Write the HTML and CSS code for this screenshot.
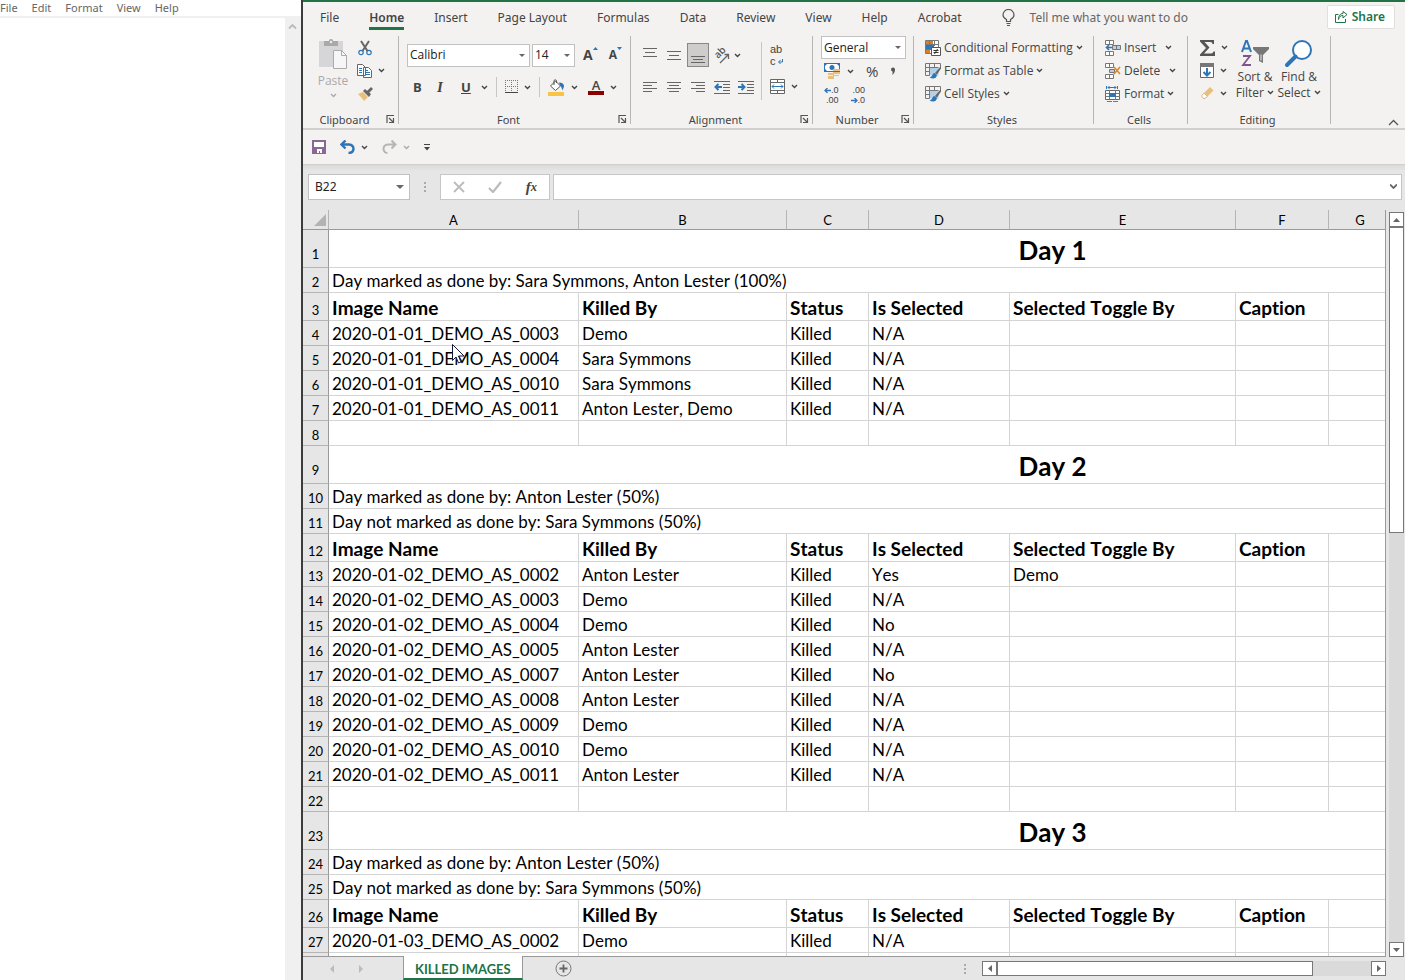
FILE: index.html
```html
<!DOCTYPE html>
<html lang="en">
<head>
    <meta charset="UTF-8">
    <meta name="viewport" content="width=device-width, initial-scale=1.0">
    <title>Killed Images</title>
    <link rel="stylesheet" href="styles.css">
</head>
<body>
    <!-- Shared shapes -->
    <svg class="sprite" width="0" height="0" aria-hidden="true">
        <symbol id="chev" viewBox="0 0 7 5"><path d="M1 1l2.500 2.500L6 1" fill="none" stroke="currentColor" stroke-width="1.400"/></symbol>
        <symbol id="launch" viewBox="0 0 9 9"><path d="M1 8V.500h7M3 3l4 4M7.500 3v4.500H3" fill="none" stroke="#555" stroke-width="1.200"/></symbol>
        <symbol id="table" viewBox="0 0 16 16">
            <path d="M4.500 4.500h9v8h-9z" fill="#b4cfe6"/>
            <path d="M.500 12.500V.500h15V5M.500 4.500h13M4.500.500v12M.500 8.500h4M9.500.500v4M.500 12.500h4" fill="none" stroke="#777"/>
            <path d="M15.500 3.500L10 10l2 1.500 4-6z" fill="#666"/>
            <path d="M9.500 10c-2.500.500-1.500 3.500-5 4.500 3 1.500 7 1.500 7.500-2.500z" fill="#2e75b6"/>
        </symbol>
    </svg>

    <!-- Text editor -->
    <section class="notepad">
        <nav class="notepad-menu">
            <a href="#">File</a>
            <a href="#">Edit</a>
            <a href="#">Format</a>
            <a href="#">View</a>
            <a href="#">Help</a>
        </nav>
        <div class="notepad-body">
            <textarea aria-label="Text editor"></textarea>
            <div class="notepad-scroll">
                <svg width="9" height="7" viewBox="0 0 9 7"><path d="M1 5.500l3.500-3.500L8 5.500" fill="none" stroke="#bbb" stroke-width="1.800"/></svg>
            </div>
        </div>
    </section>

    <!-- Spreadsheet -->
    <main class="excel">
        <nav class="tabs">
            <a href="#">File</a>
            <a href="#" class="active">Home</a>
            <a href="#">Insert</a>
            <a href="#">Page Layout</a>
            <a href="#">Formulas</a>
            <a href="#">Data</a>
            <a href="#">Review</a>
            <a href="#">View</a>
            <a href="#">Help</a>
            <a href="#">Acrobat</a>
            <button class="tell-me">
                <svg width="13" height="18" viewBox="0 0 13 18"><path d="M4.500 12.500v-2C2.500 9.500 1 8 1 6a5.500 5.500 0 0 1 11 0c0 2-1.500 3.500-3.500 4.500v2zM4.500 14.500h4M5 16.500h3" fill="none" stroke="#555" stroke-width="1.200"/></svg>
                Tell me what you want to do
            </button>
            <button class="share">
                <svg width="13" height="12" viewBox="0 0 13 12"><path d="M3.500 3.500h-3v8h10V8M3.500 8.500C4 5.500 5.500 4.500 8 4.500v2.500l4-3.500L8 .500v2C5 2.500 3.500 5 3.500 8.500z" fill="none" stroke="#217346"/></svg>
                Share
            </button>
        </nav>

        <div class="ribbon">
            <section class="group clipboard">
                <div class="group-body">
                    <button class="big paste">
                        <svg width="28" height="30" viewBox="0 0 28 30">
                            <path d="M0 2h24v26H0z" fill="#d6d6d9"/>
                            <path d="M5 2h5V1q2-2 4 0v1h5v5H5z" fill="#a9a9a9"/><circle cx="12" cy="3" r="1.200" fill="#eee"/>
                            <path d="M14.500 11.500h8l5 5v13h-13z" fill="#f6f6f6" stroke="#aaa"/><path d="M22.500 11.500v5h5" fill="none" stroke="#aaa"/>
                        </svg>
                        <span>Paste</span>
                        <svg class="chev"><use href="#chev"/></svg>
                    </button>
                    <div class="stack">
                        <button class="tool" aria-label="Cut"><svg width="16" height="16" viewBox="0 0 16 16"><path d="M4 1l6.500 10M12 1L5.500 11" stroke="#666" stroke-width="2" fill="none"/><circle cx="4" cy="12.500" r="2.200" fill="none" stroke="#2e75b6" stroke-width="1.200"/><circle cx="12" cy="12.500" r="2.200" fill="none" stroke="#2e75b6" stroke-width="1.200"/></svg></button>
                        <button class="tool" aria-label="Copy"><svg width="16" height="16" viewBox="0 0 16 16"><path d="M.500 1.500h5l3 3v8h-8zM6.500 4.500h5l3 3v7h-8z" fill="#fff" stroke="#666"/><path d="M2 5.500h3M2 7.500h3M2 9.500h3M8 9.500h5M8 11.500h5M8 7.500h3" stroke="#2e75b6"/></svg><svg class="chev"><use href="#chev"/></svg></button>
                        <button class="tool" aria-label="Format Painter"><svg width="16" height="16" viewBox="0 0 16 16"><path d="M1 8l5-2 5 5-4 4q-2-3-6-7z" fill="#e8bf7c"/><path d="M6 5l2-2 6 5-2 3zM10 5l4-4 2 2-4 4z" fill="#666"/></svg></button>
                    </div>
                </div>
                <footer><span>Clipboard</span><svg class="launch"><use href="#launch"/></svg></footer>
            </section>

            <section class="group font">
                <div class="group-body rows">
                    <div class="row">
                        <label class="combo combo-font"><select aria-label="Font"><option>Calibri</option></select></label>
                        <label class="combo combo-size"><select aria-label="Font size"><option>14</option></select></label>
                        <button class="grow" aria-label="Increase font size"><b>A</b><svg width="5" height="3" viewBox="0 0 5 3"><path d="M0 3L2.500 0 5 3z" fill="#2e75b6"/></svg></button>
                        <button class="grow shrink" aria-label="Decrease font size"><b>A</b><svg width="5" height="3" viewBox="0 0 5 3"><path d="M0 0h5L2.500 3z" fill="#2e75b6"/></svg></button>
                    </div>
                    <div class="row marks">
                        <button class="letter"><b>B</b></button>
                        <button class="letter italic"><b>I</b></button>
                        <button class="letter underline"><b>U</b><svg class="chev"><use href="#chev"/></svg></button>
                        <i class="bar"></i>
                        <button class="tool" aria-label="Borders"><svg width="13" height="14" viewBox="0 0 13 14"><path d="M.500 0v12M12.500 0v12M6.500 0v12M0 .500h13M0 6.500h13" stroke="#777" stroke-dasharray="1 1"/><path d="M0 12.500h13" stroke="#444"/></svg><svg class="chev"><use href="#chev"/></svg></button>
                        <i class="bar"></i>
                        <button class="tool" aria-label="Fill color"><svg width="17" height="17" viewBox="0 0 17 17"><path d="M2.500 7l5-5 5 5-5 4.500z" fill="#fff" stroke="#555"/><path d="M6 6V1.500q1-1.500 2.500 0V4" fill="none" stroke="#555"/><path d="M11 3.500q5 0 5 4l-1.500 4q-1-4-2.500-5z" fill="#2e75b6"/><path d="M0 13h16v4H0z" fill="#f9c443"/></svg><svg class="chev"><use href="#chev"/></svg></button>
                        <button class="tool" aria-label="Font color"><span class="font-color">A</span><svg class="chev"><use href="#chev"/></svg></button>
                    </div>
                </div>
                <footer><span>Font</span><svg class="launch"><use href="#launch"/></svg></footer>
            </section>

            <section class="group alignment">
                <div class="group-body">
                    <div class="rows">
                        <div class="row">
                            <button class="sq" aria-label="Top align"><svg width="14" height="18" viewBox="0 0 14 18"><path d="M0 2.500h14M2 6.500h10M0 10.500h14" stroke="#666"/></svg></button>
                            <button class="sq" aria-label="Middle align"><svg width="14" height="18" viewBox="0 0 14 18"><path d="M0 5.500h14M2 9.500h10M0 13.500h14" stroke="#666"/></svg></button>
                            <button class="sq pressed" aria-label="Bottom align"><svg width="14" height="18" viewBox="0 0 14 18"><path d="M0 10.500h14M2 13.500h10M0 16.500h14" stroke="#666"/></svg></button>
                            <button class="tool orientation" aria-label="Orientation"><svg width="18" height="18" viewBox="0 0 18 18"><text x="5" y="13" transform="rotate(-45 5 13)">ab</text><path d="M7 17l8-8M11.500 8.500h4V13" fill="none" stroke="#666" stroke-width="1.300"/></svg><svg class="chev"><use href="#chev"/></svg></button>
                        </div>
                        <div class="row">
                            <button class="sq" aria-label="Align left"><svg width="14" height="14" viewBox="0 0 14 14"><path d="M0 2.500h14M0 5.500h9M0 8.500h14M0 11.500h9" stroke="#666"/></svg></button>
                            <button class="sq" aria-label="Center"><svg width="14" height="14" viewBox="0 0 14 14"><path d="M0 2.500h14M2 5.500h10M0 8.500h14M2 11.500h10" stroke="#666"/></svg></button>
                            <button class="sq" aria-label="Align right"><svg width="14" height="14" viewBox="0 0 14 14"><path d="M0 2.500h14M5 5.500h9M0 8.500h14M5 11.500h9" stroke="#666"/></svg></button>
                            <button class="sq" aria-label="Decrease indent"><svg width="16" height="14" viewBox="0 0 16 14"><path d="M0 1.500h16M9 4.500h7M9 7.500h7M9 10.500h7M0 13.500h16" stroke="#666"/><path d="M8 7H2M4.500 4L1.500 7l3 3" fill="none" stroke="#2e75b6" stroke-width="2"/></svg></button>
                            <button class="sq" aria-label="Increase indent"><svg width="16" height="14" viewBox="0 0 16 14"><path d="M0 1.500h16M9 4.500h7M9 7.500h7M9 10.500h7M0 13.500h16" stroke="#666"/><path d="M0 7h6M3.500 4l3 3-3 3" fill="none" stroke="#2e75b6" stroke-width="2"/></svg></button>
                        </div>
                    </div>
                    <i class="bar tall"></i>
                    <div class="rows">
                        <button class="wrap-text" aria-label="Wrap text"><span>ab</span><span>c<svg width="5" height="5" viewBox="0 0 5 5"><path d="M4.500 0v3H1M2.500 1L.500 3l2 2" fill="none" stroke="#2e75b6"/></svg></span></button>
                        <button class="tool merge" aria-label="Merge and center"><svg width="15" height="15" viewBox="0 0 15 15"><path d="M.500.500h14v14H.500zM.500 3.500h14M.500 11.500h14M7.500.500v3M7.500 11.500v3" fill="#fff" stroke="#666"/><path d="M2 7.500h11M4 5.500l-2 2 2 2M11 5.500l2 2-2 2" fill="none" stroke="#2e75b6"/></svg><svg class="chev"><use href="#chev"/></svg></button>
                    </div>
                </div>
                <footer><span>Alignment</span><svg class="launch"><use href="#launch"/></svg></footer>
            </section>

            <section class="group number">
                <div class="group-body rows">
                    <label class="combo"><select aria-label="Number format"><option>General</option></select></label>
                    <div class="row">
                        <button class="tool" aria-label="Accounting format"><svg width="17" height="16" viewBox="0 0 17 16"><path d="M0 0h16v9H0z" fill="#2e75b6"/><path d="M3 1h10l2 2v3l-2 2H3L1 6V3z" fill="#fff"/><circle cx="8" cy="4.500" r="2.500" fill="#2e75b6"/><path d="M9 6h7v2H9zM9 9h7v2H9zM9 12h6v1H9zM4 10h6v2H4zM4 13h6v3H4z" fill="#e8bf7c"/></svg><svg class="chev"><use href="#chev"/></svg></button>
                        <button class="sign">%</button>
                        <button class="sign comma" aria-label="Comma style"><svg width="6" height="8" viewBox="0 0 6 8"><path d="M1 2.500a2 2 0 1 1 4 0Q5 6 2 8 3 6 2.500 4.500 1 4 1 2.500z" fill="#555"/></svg></button>
                    </div>
                    <div class="row decimals">
                        <button class="decimal" aria-label="Increase decimal"><span><svg width="7" height="5" viewBox="0 0 7 5"><path d="M7 2.500H1M3.500 0L1 2.500 3.500 5" fill="none" stroke="#2e75b6" stroke-width="1.300"/></svg>.0</span><span>.00</span></button>
                        <button class="decimal" aria-label="Decrease decimal"><span>.00</span><span><svg width="7" height="5" viewBox="0 0 7 5"><path d="M0 2.500h6M3.500 0L6 2.500 3.500 5" fill="none" stroke="#2e75b6" stroke-width="1.300"/></svg>.0</span></button>
                    </div>
                </div>
                <footer><span>Number</span><svg class="launch"><use href="#launch"/></svg></footer>
            </section>

            <section class="group styles">
                <div class="group-body stack">
                    <button class="tool"><svg width="16" height="16" viewBox="0 0 16 16"><path d="M.500.500h13v13H.500z" fill="#fff" stroke="#777"/><path d="M1 1h7v3H1zM1 9h4v4H1z" fill="#dd7e26"/><path d="M1 5h8v4H1z" fill="#2e75b6"/><path d="M0 4.500h14M0 9.500h6M9.500 0v6M4.500 0v4" stroke="#777"/><path d="M6.500 7.500h9v8h-9z" fill="#fff" stroke="#555"/><path d="M8.500 10.500h5M8.500 12.500h5M12.500 9l-3 5" stroke="#333"/></svg>Conditional Formatting<svg class="chev"><use href="#chev"/></svg></button>
                    <button class="tool"><svg width="16" height="16"><use href="#table"/></svg>Format as Table<svg class="chev"><use href="#chev"/></svg></button>
                    <button class="tool"><svg width="16" height="16"><use href="#table"/></svg>Cell Styles<svg class="chev"><use href="#chev"/></svg></button>
                </div>
                <footer><span>Styles</span></footer>
            </section>

            <section class="group cells">
                <div class="group-body stack">
                    <button class="tool spread"><svg width="16" height="16" viewBox="0 0 16 16"><path d="M.500.500h8v4h-8zM4.500.500v4M.500 11.500h8v4h-8zM4.500 11.500v4" fill="#fff" stroke="#777"/><path d="M7.500 5.500h8v4h-8z" fill="#b4cfe6" stroke="#777"/><path d="M11.500 5.500v4" stroke="#777"/><path d="M7 7.500H2M4 5L1.500 7.500 4 10" fill="none" stroke="#2e75b6" stroke-width="1.600"/></svg>Insert<svg class="chev"><use href="#chev"/></svg></button>
                    <button class="tool spread"><svg width="16" height="16" viewBox="0 0 16 16"><path d="M.500.500h8v4h-8zM4.500.500v4M.500 11.500h8v4h-8zM4.500 11.500v4" fill="#fff" stroke="#777"/><path d="M4.500 6.500h5v3h-5z" fill="#b4cfe6" stroke="#777"/><path d="M9 4l6 7M15 4l-6 7" stroke="#dd8a2e" stroke-width="1.700"/></svg>Delete<svg class="chev"><use href="#chev"/></svg></button>
                    <button class="tool"><svg width="16" height="16" viewBox="0 0 16 16"><path d="M.500 4.500h14v9H.500z" fill="#fff" stroke="#666"/><path d="M0 7.500h15M0 10.500h15M4.500 4v10M10.500 4v10M2 15.500h5M8 15.500h5" stroke="#777"/><path d="M4 7h7v4H4z" fill="#2e75b6"/><path d="M1.500 0v3M12.500 0v3M3 1.500h8M4.500 0L3 1.500 4.500 3M9.500 0L11 1.500 9.500 3" fill="none" stroke="#2e75b6"/></svg>Format<svg class="chev"><use href="#chev"/></svg></button>
                </div>
                <footer><span>Cells</span></footer>
            </section>

            <section class="group editing">
                <div class="group-body">
                    <div class="stack">
                        <button class="tool" aria-label="AutoSum"><svg width="16" height="16" viewBox="0 0 16 16"><path d="M0 0h14v4h-1.500Q12.500 2 10.500 2H4.500l5 5.500L4 13.500h7q2 0 2.500-2H15V16H0v-1.500L6 8 0 1.500z" fill="#555"/></svg><svg class="chev"><use href="#chev"/></svg></button>
                        <button class="tool" aria-label="Fill"><svg width="15" height="15" viewBox="0 0 15 15"><path d="M.500.500h13v14H.500z" fill="#fff" stroke="#666"/><path d="M0 0h14v4H0z" fill="#777"/><path d="M7 5v7M3.500 9L7 12.500 10.500 9" fill="none" stroke="#2e75b6" stroke-width="2"/></svg><svg class="chev"><use href="#chev"/></svg></button>
                        <button class="tool" aria-label="Clear"><svg width="15" height="15" viewBox="0 0 15 15"><path d="M4 7l6-6 3.500 3.500-6 6z" fill="#e8bf7c"/><path d="M4 7l-2.500 3L4 13l3.500-2.500z" fill="#fff" stroke="#e0b47a"/></svg><svg class="chev"><use href="#chev"/></svg></button>
                    </div>
                    <button class="big">
                        <svg width="30" height="30" viewBox="0 0 30 30">
                            <path d="M2 13L6 2h1l4 11M3 9.500h7" fill="none" stroke="#2e75b6" stroke-width="2"/>
                            <path d="M3 17h7L3 26h8" fill="none" stroke="#7d5490" stroke-width="1.800"/>
                            <path d="M13 8h16v2l-6 6v8l-4-2v-6l-6-6z" fill="#777"/><path d="M20.500 15.500h1v6h-1z" fill="#eee"/>
                        </svg>
                        <span>Sort &amp;<br>Filter <svg class="chev"><use href="#chev"/></svg></span>
                    </button>
                    <button class="big">
                        <svg width="30" height="30" viewBox="0 0 30 30"><circle cx="18" cy="11" r="9" fill="#fff" stroke="#2e75b6" stroke-width="2"/><path d="M11.500 17.500L3 26" stroke="#2e75b6" stroke-width="4" stroke-linecap="round"/></svg>
                        <span>Find &amp;<br>Select <svg class="chev"><use href="#chev"/></svg></span>
                    </button>
                </div>
                <footer><span>Editing</span></footer>
            </section>
            <button class="collapse" aria-label="Collapse ribbon"><svg width="11" height="7" viewBox="0 0 11 7"><path d="M1 6l4.500-4.500L10 6" fill="none" stroke="#555" stroke-width="1.300"/></svg></button>
        </div>

        <div class="quick">
            <button class="tool" aria-label="Save"><svg width="14" height="14" viewBox="0 0 14 14"><path d="M1 1h12v12H1z" fill="#fff" stroke="#8a6797" stroke-width="2"/><path d="M1 7h12v6H1z" fill="#8a6797"/><path d="M5 9h5v4H8v-2H7v2H5z" fill="#fff"/></svg></button>
            <button class="tool" aria-label="Undo"><svg width="15" height="14" viewBox="0 0 15 14"><path d="M2 4.500h7q4.500.500 4.500 4.500-.500 4-5 4" fill="none" stroke="#2e75b6" stroke-width="2.400"/><path d="M5.500.500L1.500 4.500l4 4" fill="none" stroke="#2e75b6" stroke-width="2.400"/></svg><svg class="chev"><use href="#chev"/></svg></button>
            <button class="tool off" aria-label="Redo"><svg width="15" height="14" viewBox="0 0 15 14"><path d="M13 4.500H6Q1.500 5 1.500 9q.500 4 4 4M9.500.500l4 4-4 4" fill="none" stroke="#b5b5b5" stroke-width="2"/></svg><svg class="chev"><use href="#chev"/></svg></button>
            <button class="tool" aria-label="Customize toolbar"><svg width="6" height="7" viewBox="0 0 6 7"><path d="M0 .500h6" stroke="#444"/><path d="M0 3h6L3 6.500z" fill="#444"/></svg></button>
        </div>

        <div class="formula-bar">
            <label class="combo name-box"><select aria-label="Name box"><option>B22</option></select></label>
            <i class="dots"></i>
            <div class="formula-tools">
                <button aria-label="Cancel"><svg width="12" height="12" viewBox="0 0 12 12"><path d="M1 1l10 10M11 1L1 11" stroke="#bbb" stroke-width="1.800"/></svg></button>
                <button aria-label="Enter"><svg width="14" height="12" viewBox="0 0 14 12"><path d="M1 7l4 4 8-10" fill="none" stroke="#bbb" stroke-width="2.200"/></svg></button>
                <button class="fx">f<small>x</small></button>
            </div>
            <div class="formula-input">
                <input type="text" aria-label="Formula bar">
                <svg class="chev" viewBox="0 0 7 5"><path d="M0 .500l3.500 3.500L7 .500" fill="none" stroke="#666" stroke-width="1.800"/></svg>
            </div>
        </div>

        <div class="sheet">
            <div class="grid-view">
                <table>
                    <colgroup><col class="col-n"><col class="col-a"><col class="col-b"><col class="col-c"><col class="col-d"><col class="col-e"><col class="col-f"><col class="col-g"><col class="col-h"></colgroup>
                    <thead>
                        <tr><th class="corner"><svg width="12" height="12" viewBox="0 0 12 12"><path d="M12 0v12H0z" fill="#b3b3b3"/></svg></th><th>A</th><th>B</th><th>C</th><th>D</th><th>E</th><th>F</th><th>G</th><th></th></tr>
                    </thead>
                    <tbody>
                        <tr class="day"><th>1</th><td colspan="8">Day 1</td></tr>
                        <tr><th>2</th><td colspan="8">Day marked as done by: Sara Symmons, Anton Lester (100%)</td></tr>
                        <tr class="head"><th>3</th><td>Image Name</td><td>Killed By</td><td>Status</td><td>Is Selected</td><td>Selected Toggle By</td><td>Caption</td><td></td><td></td></tr>
                        <tr><th>4</th><td>2020-01-01_DEMO_AS_0003</td><td>Demo</td><td>Killed</td><td>N/A</td><td></td><td></td><td></td><td></td></tr>
                        <tr><th>5</th><td>2020-01-01_DEMO_AS_0004</td><td>Sara Symmons</td><td>Killed</td><td>N/A</td><td></td><td></td><td></td><td></td></tr>
                        <tr><th>6</th><td>2020-01-01_DEMO_AS_0010</td><td>Sara Symmons</td><td>Killed</td><td>N/A</td><td></td><td></td><td></td><td></td></tr>
                        <tr><th>7</th><td>2020-01-01_DEMO_AS_0011</td><td>Anton Lester, Demo</td><td>Killed</td><td>N/A</td><td></td><td></td><td></td><td></td></tr>
                        <tr><th>8</th><td></td><td></td><td></td><td></td><td></td><td></td><td></td><td></td></tr>
                        <tr class="day"><th>9</th><td colspan="8">Day 2</td></tr>
                        <tr><th>10</th><td colspan="8">Day marked as done by: Anton Lester (50%)</td></tr>
                        <tr><th>11</th><td colspan="8">Day not marked as done by: Sara Symmons (50%)</td></tr>
                        <tr class="head"><th>12</th><td>Image Name</td><td>Killed By</td><td>Status</td><td>Is Selected</td><td>Selected Toggle By</td><td>Caption</td><td></td><td></td></tr>
                        <tr><th>13</th><td>2020-01-02_DEMO_AS_0002</td><td>Anton Lester</td><td>Killed</td><td>Yes</td><td>Demo</td><td></td><td></td><td></td></tr>
                        <tr><th>14</th><td>2020-01-02_DEMO_AS_0003</td><td>Demo</td><td>Killed</td><td>N/A</td><td></td><td></td><td></td><td></td></tr>
                        <tr><th>15</th><td>2020-01-02_DEMO_AS_0004</td><td>Demo</td><td>Killed</td><td>No</td><td></td><td></td><td></td><td></td></tr>
                        <tr><th>16</th><td>2020-01-02_DEMO_AS_0005</td><td>Anton Lester</td><td>Killed</td><td>N/A</td><td></td><td></td><td></td><td></td></tr>
                        <tr><th>17</th><td>2020-01-02_DEMO_AS_0007</td><td>Anton Lester</td><td>Killed</td><td>No</td><td></td><td></td><td></td><td></td></tr>
                        <tr><th>18</th><td>2020-01-02_DEMO_AS_0008</td><td>Anton Lester</td><td>Killed</td><td>N/A</td><td></td><td></td><td></td><td></td></tr>
                        <tr><th>19</th><td>2020-01-02_DEMO_AS_0009</td><td>Demo</td><td>Killed</td><td>N/A</td><td></td><td></td><td></td><td></td></tr>
                        <tr><th>20</th><td>2020-01-02_DEMO_AS_0010</td><td>Demo</td><td>Killed</td><td>N/A</td><td></td><td></td><td></td><td></td></tr>
                        <tr><th>21</th><td>2020-01-02_DEMO_AS_0011</td><td>Anton Lester</td><td>Killed</td><td>N/A</td><td></td><td></td><td></td><td></td></tr>
                        <tr><th>22</th><td></td><td></td><td></td><td></td><td></td><td></td><td></td><td></td></tr>
                        <tr class="day"><th>23</th><td colspan="8">Day 3</td></tr>
                        <tr><th>24</th><td colspan="8">Day marked as done by: Anton Lester (50%)</td></tr>
                        <tr><th>25</th><td colspan="8">Day not marked as done by: Sara Symmons (50%)</td></tr>
                        <tr class="head"><th>26</th><td>Image Name</td><td>Killed By</td><td>Status</td><td>Is Selected</td><td>Selected Toggle By</td><td>Caption</td><td></td><td></td></tr>
                        <tr><th>27</th><td>2020-01-03_DEMO_AS_0002</td><td>Demo</td><td>Killed</td><td>N/A</td><td></td><td></td><td></td><td></td></tr>
                        <tr><th></th><td></td><td></td><td></td><td></td><td></td><td></td><td></td><td></td></tr>
                    </tbody>
                </table>
            </div>
            <div class="scroll vertical">
                <button aria-label="Scroll up"><svg width="7" height="4" viewBox="0 0 7 4"><path d="M0 4L3.500 0 7 4z" fill="#666"/></svg></button>
                <i class="thumb"></i>
                <i class="track"></i>
                <button aria-label="Scroll down"><svg width="7" height="4" viewBox="0 0 7 4"><path d="M0 0h7L3.500 4z" fill="#666"/></svg></button>
            </div>
        </div>

        <div class="sheet-bar">
            <button class="nav" aria-label="Previous sheet"><svg width="4" height="8" viewBox="0 0 4 8"><path d="M4 0v8L0 4z" fill="#bbb"/></svg></button>
            <button class="nav" aria-label="Next sheet"><svg width="4" height="8" viewBox="0 0 4 8"><path d="M0 0v8l4-4z" fill="#bbb"/></svg></button>
            <a href="#" class="sheet-tab">KILLED IMAGES</a>
            <button class="add" aria-label="New sheet"><svg width="17" height="17" viewBox="0 0 17 17"><circle cx="8.500" cy="8.500" r="7.500" fill="none" stroke="#777"/><path d="M8.500 4.500v8M4.500 8.500h8" stroke="#666" stroke-width="1.800"/></svg></button>
            <i class="dots"></i>
            <div class="scroll horizontal">
                <button aria-label="Scroll left"><svg width="4" height="7" viewBox="0 0 4 7"><path d="M4 0v7L0 3.500z" fill="#666"/></svg></button>
                <i class="thumb"></i>
                <i class="track"></i>
                <button aria-label="Scroll right"><svg width="4" height="7" viewBox="0 0 4 7"><path d="M0 0v7l4-3.500z" fill="#666"/></svg></button>
            </div>
        </div>
    </main>

    <!-- Mouse pointer -->
    <svg class="pointer" width="13" height="20" viewBox="0 0 13 20"><path d="M.500.500v16l3.500-3.500 2.500 6 2.500-1-2.500-6H12z" fill="#fff" stroke="#111a3a"/></svg>
</body>
</html>
```
FILE: styles.css
```css
* {
    box-sizing: border-box;
}

body {
    margin: 0;
    height: 100vh;
    display: flex;
    overflow: hidden;
    font-family: "Noto Sans", "Open Sans", sans-serif;
    font-size: 12px;
    line-height: 16px;
    color: #444;
    background: #fff;
}

button {
    margin: 0;
    padding: 0;
    border: none;
    background: none;
    font: inherit;
    color: inherit;
    display: flex;
    align-items: center;
}

a {
    color: inherit;
    text-decoration: none;
}

svg {
    display: block;
    flex: none;
}

.sprite,
.pointer {
    position: absolute;
}

.pointer {
    left: 452px;
    top: 344px;
}

.chev {
    width: 7px;
    height: 5px;
}

/* Text editor */
.notepad {
    flex: 0 0 303px;
    display: flex;
    flex-direction: column;
    border-right: 2px solid #3c3c3c;
}

.notepad-menu {
    display: flex;
    gap: 14px;
    height: 18px;
    font-size: 11px;
    color: #666;
    border-bottom: 2px solid #f0f0f0;
}

.notepad-body {
    flex: 1;
    display: flex;
}

.notepad textarea {
    flex: 1;
    min-width: 0;
    border: none;
    resize: none;
    outline: none;
}

.notepad-scroll {
    width: 16px;
    padding: 5px 3px;
    background: #f0f0f0;
}

/* Spreadsheet */
.excel {
    flex: 1;
    min-width: 0;
    display: flex;
    flex-direction: column;
    background: #f3f2f1;
    border-top: 2px solid #217346;
}

.tabs {
    height: 34px;
    padding: 3px 10px 0 17px;
    display: flex;
    align-items: flex-start;
    gap: 30px;
    font-size: 12px;
    white-space: nowrap;
}

.tabs a {
    padding-top: 5px;
    height: 25px;
}

.tabs .active {
    font-weight: 600;
    border-bottom: 3px solid #217346;
}

.tell-me {
    height: 25px;
    margin-left: 10px;
    gap: 15px;
    color: #666;
}

.share {
    margin-left: auto;
    height: 24px;
    padding: 0 9px 0 7px;
    gap: 4px;
    background: #fff;
    border: 1px solid #e1dfdd;
    border-radius: 2px;
    color: #217346;
    font-weight: 600;
}

.ribbon {
    display: flex;
    height: 94px;
    border-bottom: 2px solid #d2d0ce;
    font-family: "Open Sans", "Noto Sans", sans-serif;
}

.group {
    height: 88px;
    display: flex;
    flex-direction: column;
    border-right: 1px solid #b8b6b4;
    white-space: nowrap;
}

.group-body {
    flex: 1;
    display: flex;
}

.group footer {
    display: flex;
    align-items: center;
    height: 9px;
    padding-right: 3px;
    font-family: "Noto Sans", sans-serif;
    font-size: 11px;
}

.group footer span {
    flex: 1;
    text-align: center;
}

.launch {
    width: 9px;
    height: 9px;
}

.clipboard { width: 96px; }
.font { width: 232px; }
.alignment { width: 182px; }
.number { width: 101px; }
.styles { width: 180px; }
.cells { width: 94px; }
.editing { width: 143px; }

.stack {
    display: flex;
    flex-direction: column;
}

.tool {
    height: 23px;
    gap: 6px;
}

.stack .tool {
    gap: 5px;
}

.rows {
    display: flex;
    flex-direction: column;
    gap: 8px;
    padding-top: 7px;
}

.row {
    display: flex;
    align-items: center;
    height: 24px;
}

.big {
    flex-direction: column;
    padding-top: 3px;
}

.big span .chev {
    display: inline-block;
    vertical-align: 2px;
}

.paste {
    width: 34px;
    margin: 0 7px 0 13px;
    gap: 4px;
    color: #aaa;
}

.combo {
    display: grid;
    align-items: center;
    height: 23px;
    background: #fff;
    border: 1px solid #c1c1c1;
}

.combo select {
    grid-area: 1 / 1;
    width: 100%;
    padding: 0 2px;
    border: none;
    background: none;
    appearance: none;
    outline: none;
    font: inherit;
    font-size: 12px;
    color: #222;
}

.combo::after {
    content: "";
    grid-area: 1 / 1;
    justify-self: end;
    margin-right: 4px;
    border: 3px solid transparent;
    border-top-color: #666;
    border-bottom-width: 0;
}

.font .group-body {
    padding-left: 8px;
}

.combo-font {
    width: 123px;
    margin-right: 2px;
}

.combo-size {
    width: 43px;
}

.grow {
    margin-left: 8px;
    align-items: flex-start;
    height: 16px;
    font-size: 14px;
}

.shrink {
    margin-left: 11px;
    font-size: 12px;
}

.letter {
    width: 24px;
    padding-left: 6px;
    gap: 10px;
    font-size: 13px;
}

.italic {
    font-family: "Liberation Serif", serif;
    font-style: italic;
    font-size: 15px;
}

.underline {
    width: 33px;
}

.underline b {
    text-decoration: underline;
}

.bar {
    width: 1px;
    height: 20px;
    margin: 0 8px;
    background: #c8c6c4;
}

.marks .tool + .tool {
    margin-left: 10px;
}

.font-color {
    width: 16px;
    height: 16px;
    font-size: 13px;
    font-weight: 600;
    line-height: 13px;
    text-align: center;
    border-bottom: 4px solid #8b0000;
}

.alignment .group-body {
    padding-left: 7px;
}

.sq {
    width: 24px;
    height: 24px;
    justify-content: center;
}

.pressed {
    width: 22px;
    margin: 0 4px 0 1px;
    background: #cfcdcb;
    border: 1px solid #888;
}

.orientation {
    gap: 3px;
}

.orientation text {
    font-family: "Open Sans", sans-serif;
    font-size: 10px;
    font-weight: 600;
    fill: #555;
}

.tall {
    height: 58px;
    margin: 6px 8px 0 3px;
}

.wrap-text {
    height: 24px;
    width: 18px;
    flex-direction: column;
    justify-content: center;
    align-items: flex-start;
    font-family: "Liberation Sans", sans-serif;
    line-height: 12px;
}

.wrap-text span {
    display: flex;
    align-items: center;
    gap: 2px;
    font-size: 11px;
}

.number .group-body {
    padding: 0 8px;
    gap: 0;
}

.number .combo {
    width: 85px;
    flex: none;
}

.number .row {
    padding-left: 3px;
    gap: 12px;
}

.sign {
    font-size: 15px;
}

.decimal {
    flex-direction: column;
    align-items: flex-end;
    font-family: "Liberation Sans", sans-serif;
    font-size: 9px;
    line-height: 10px;
}

.decimal span {
    display: flex;
    align-items: center;
}

.styles .stack,
.cells .stack {
    padding-left: 11px;
}

.styles .tool,
.cells .tool {
    gap: 3px;
}

.cells .spread .chev {
    margin-left: 6px;
}

.editing .stack {
    padding-left: 12px;
    width: 45px;
}

.editing .big {
    width: 44px;
}

.collapse {
    margin: auto 6px 2px auto;
}

.quick {
    display: flex;
    align-items: center;
    gap: 14px;
    height: 35px;
    padding-left: 9px;
    border-bottom: 1px solid #d2d0ce;
}

.off {
    color: #aaa;
}

.formula-bar {
    display: flex;
    align-items: center;
    height: 45px;
    padding: 0 3px 2px 5px;
    background: linear-gradient(#dadada, #e6e6e6 6px);
}

.formula-bar .combo {
    height: 26px;
}

.name-box {
    width: 102px;
}

.name-box select {
    padding-left: 6px;
}

.formula-bar .name-box::after {
    border-width: 4px;
    border-bottom-width: 0;
    margin-right: 5px;
}

.dots {
    width: 2px;
    height: 10px;
    background: repeating-linear-gradient(#aaa 0 2px, transparent 2px 4px);
}

.formula-bar .dots {
    margin: 0 14px;
}

.formula-tools {
    display: flex;
    justify-content: space-between;
    width: 110px;
    height: 26px;
    padding: 0 12px;
    margin-right: 3px;
    background: #fff;
    border: 1px solid #c6c6c6;
}

.fx {
    font-family: "Liberation Serif", serif;
    font-style: italic;
    font-weight: bold;
    font-size: 15px;
}

.formula-input {
    flex: 1;
    display: flex;
    align-items: center;
    height: 26px;
    padding-right: 4px;
    background: #fff;
    border: 1px solid #c6c6c6;
}

.formula-input input {
    flex: 1;
    border: none;
    background: none;
    outline: none;
}

.sheet {
    flex: 1;
    min-height: 0;
    display: flex;
    background: #e6e6e6;
}

.grid-view {
    flex: 1;
    overflow: hidden;
    border-right: 1px solid #999;
    border-bottom: 1px solid #999;
}

table {
    width: 1474px;
    table-layout: fixed;
    border-collapse: separate;
    border-spacing: 0;
    background: #fff;
    font-family: Lato, "Noto Sans", sans-serif;
    font-size: 17px;
    font-kerning: none;
    font-variant-ligatures: none;
    line-height: 20px;
    color: #000;
}

.col-n { width: 26px; }
.col-a { width: 250px; }
.col-b { width: 208px; }
.col-c { width: 82px; }
.col-d { width: 141px; }
.col-e { width: 226px; }
.col-f { width: 93px; }
.col-g { width: 63px; }
.col-h { width: 385px; }

th {
    padding: 0;
    background: #e6e6e6;
    border-right: 1px solid #999;
    border-bottom: 1px solid #b5b5b5;
    font-size: 13px;
    font-weight: normal;
    line-height: 16px;
}

thead th {
    height: 20px;
    border-bottom-color: #999;
    border-right-color: #b5b5b5;
}

.corner svg {
    margin-left: 11px;
}

tbody th {
    padding-bottom: 2px;
    vertical-align: bottom;
}

td {
    height: 25px;
    padding: 2px 3px 0;
    border-right: 1px solid #d4d4d4;
    border-bottom: 1px solid #d4d4d4;
    white-space: nowrap;
}

.head td {
    height: 28px;
    font-size: 19px;
    font-weight: bold;
}

.day td {
    height: 38px;
    font-size: 26px;
    font-weight: bold;
    text-align: center;
}

.day th {
    padding-bottom: 5px;
}

.scroll {
    display: flex;
}

.scroll button {
    width: 15px;
    height: 15px;
    justify-content: center;
    background: #fff;
    border: 1px solid #777;
}

.thumb {
    background: #fff;
    border: 1px solid #777;
}

.track {
    background: #dadada;
}

.vertical {
    flex-direction: column;
    width: 19px;
    padding: 2px 1px 0 3px;
}

.vertical .thumb {
    flex: 305;
}

.vertical .track {
    flex: 410;
}

.sheet-bar {
    display: flex;
    align-items: center;
    height: 23px;
    padding-right: 19px;
    background: #e6e6e6;
}

.nav {
    margin-left: 25px;
}

.nav:first-child {
    margin-left: 27px;
}

.sheet-tab {
    align-self: stretch;
    margin: -1px 32px 0 40px;
    padding: 5px 11px 0;
    background: #fff;
    border: 1px solid #999;
    border-top: none;
    border-bottom: 2px solid #217346;
    font-family: Lato, sans-serif;
    font-weight: bold;
    font-size: 13px;
    color: #217346;
    white-space: nowrap;
}

.sheet-bar .dots {
    margin: 0 16px 0 auto;
}

.horizontal {
    width: 404px;
}

.horizontal .thumb {
    flex: 316;
}

.horizontal .track {
    flex: 58;
}
```
